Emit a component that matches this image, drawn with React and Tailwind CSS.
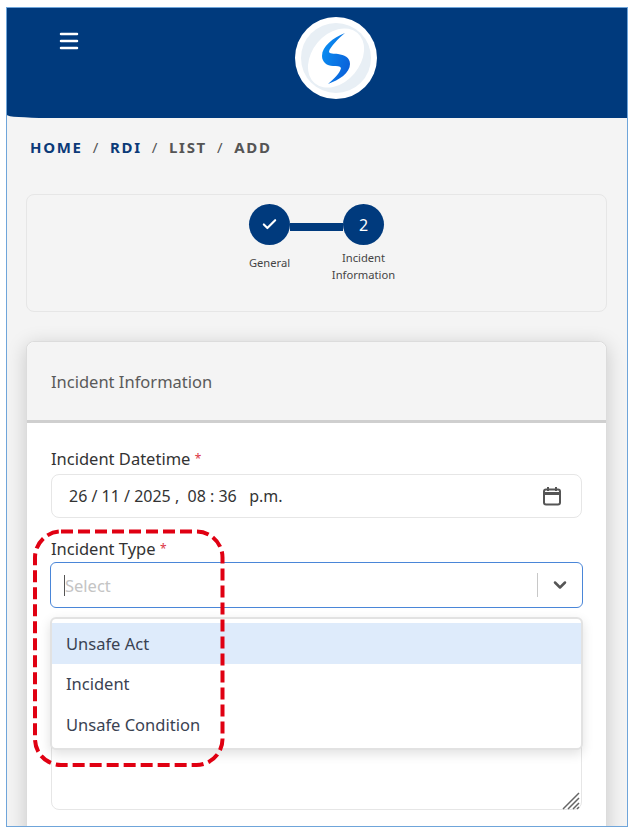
import React from "react";
import { Menu, Check, ChevronDown } from "lucide-react";

const font = { fontFamily: '"Noto Sans", sans-serif' };

const Logo = () => (
  <div className="w-[82px] h-[82px] rounded-full bg-white flex items-center justify-center">
    <svg width="70" height="70" viewBox="0 0 70 70">
      <defs>
        <linearGradient id="swoosh" x1="0" y1="0" x2="1" y2="0.6">
          <stop offset="0" stopColor="#0a94f5" />
          <stop offset="1" stopColor="#0a62da" />
        </linearGradient>
      </defs>
      <circle cx="35" cy="35" r="35" fill="#e8eff5" />
      <ellipse cx="35" cy="35" rx="24" ry="33" transform="rotate(40 35 35)" fill="#ffffff" />
      <path
        d="M44 10 C32 15 21 23 21 33 C21 39 26 43 32 43 C36 43 39 43 40 45 C39 50 33 56 27 61 C38 57 49 50 49 41 C49 34 43 32 37 31 C33 30.5 28 31 28 28.5 C29 24 38 15 44 10 Z"
        fill="url(#swoosh)"
      />
    </svg>
  </div>
);

const Stepper = () => (
  <div className="h-[118px] ml-[19px] mr-[20px] mt-[37px] bg-[#f4f4f4] border border-[#e6e6e6] rounded-lg flex justify-center pt-[9px]">
    <div className="flex flex-col items-center w-[41px]">
      <div className="w-[41px] h-[41px] rounded-full bg-[#003a7d] flex items-center justify-center text-white">
        <Check size={17} strokeWidth={3} />
      </div>
      <span className="mt-[10px] text-[11.2px] leading-4 text-[#444] whitespace-nowrap">General</span>
    </div>
    <div className="w-[53px] h-[8px] bg-[#003a7d] mt-[19px]" />
    <div className="flex flex-col items-center w-[41px]">
      <div className="w-[41px] h-[41px] rounded-full bg-[#003a7d] flex items-center justify-center text-white text-[16px]">
        2
      </div>
      <span className="mt-[4px] text-[11.2px] leading-[17px] text-[#444] text-center whitespace-nowrap">
        Incident
        <br />
        Information
      </span>
    </div>
  </div>
);

const options = ["Unsafe Act", "Incident", "Unsafe Condition"];

export default function App() {
  return (
    <div className="w-[634px] h-[834px] bg-white pl-[6px] pt-[7px]" style={font}>
      <div className="w-[622px] h-[820px] border border-[#6fa5da] bg-[#f4f4f4] overflow-hidden relative">
        <header className="h-[110px] bg-[#003a7d] rounded-bl-[40px_3px] pl-[288px] pt-[9px] relative">
          <Menu size={24} strokeWidth={2.5} className="absolute left-[50px] top-[21px] text-white" />
          <Logo />
        </header>

        <nav className="mt-[19px] ml-[23px] h-[20px] flex items-center text-[15px] font-bold tracking-[1.7px] text-[#555]">
          <span className="text-[#0b3a78]">HOME</span>
          <span className="mx-[10px] font-normal">/</span>
          <span className="text-[#0b3a78]">RDI</span>
          <span className="mx-[10px] font-normal">/</span>
          <span>LIST</span>
          <span className="mx-[10px] font-normal">/</span>
          <span>ADD</span>
        </nav>

        <Stepper />

        <section className="ml-[19px] mr-[20px] mt-[29px] h-[500px] bg-white border border-[#dcdcdc] rounded-t-lg shadow-[0_4px_20px_rgba(0,0,0,0.18)]">
          <div className="h-[81px] bg-[#f4f4f4] border-b-[3px] border-[#cfcfcf] rounded-t-lg flex items-center pl-[24px] pt-[2px] text-[16.5px] text-[#5a5a5a]">
            Incident Information
          </div>
          <div className="px-[24px] pt-[23px] relative">
            <label className="block text-[16.5px] leading-[26px] text-[#333]">
              Incident Datetime <span className="text-[#dc3545] text-[12px] align-top">*</span>
            </label>
            <div className="mt-[2px] h-[44px] border border-[#e6e6e6] rounded-lg flex items-center justify-between pl-[17px] pr-[19px] text-[16px] text-[#333]">
              <span className="whitespace-pre">26 / 11 / 2025 ,  08 : 36   p.m.</span>
              <svg width="20" height="20" viewBox="0 0 20 20" fill="none" stroke="#555" strokeWidth="2">
                <rect x="2" y="3.5" width="16" height="15" rx="2" />
                <path d="M2 7.5h16" strokeWidth="3" />
                <path d="M6 1v4M14 1v4" />
              </svg>
            </div>

            <label className="block mt-[18px] text-[16.5px] leading-[26px] text-[#333]">
              Incident Type <span className="text-[#dc3545] text-[12px] align-top">*</span>
            </label>
            <div className="-mx-px h-[46px] border border-[#4a86d8] rounded-md flex items-center bg-white">
              <span className="ml-[13px] w-px h-[21px] bg-[#555]" />
              <span className="flex-1 pt-[2px] text-[16.5px] text-[#c4c4c4]">Select</span>
              <span className="w-px h-[24px] bg-[#c8c8c8]" />
              <span className="w-[44px] flex justify-center text-[#555]">
                <ChevronDown size={20} strokeWidth={3} />
              </span>
            </div>

            <div className="mt-[9px] h-[193px] border border-[#e6e6e6] rounded-lg" />
            <div className="absolute right-[26px] top-[369px] w-[18px] h-[18px]">
              <svg width="18" height="18" viewBox="0 0 18 18" stroke="#666" strokeWidth="1.5">
                <path d="M1 17L17 1M6 17L17 6M11 17L17 11M15 17L17 15" />
              </svg>
            </div>

            {/* open dropdown sits over the textarea below */}
            <div className="absolute left-[23px] right-[23px] top-[194px] h-[133px] bg-white border-2 border-[#e2e2e2] rounded-md pt-[4px] shadow-[0_4px_12px_rgba(0,0,0,0.12)]">
              {options.map((opt, i) => (
                <div
                  key={opt}
                  className={`h-[40.5px] flex items-center pl-[14px] pt-[2px] text-[16.5px] text-[#3a4252] ${
                    i === 0 ? "bg-[#deebfb]" : ""
                  }`}
                >
                  {opt}
                </div>
              ))}
            </div>
          </div>
        </section>

        {/* red callout drawn over the screenshot */}
        <svg className="absolute left-[26px] top-[521px]" width="192" height="240" fill="none">
          <rect
            x="2"
            y="2.5"
            width="187.5"
            height="233.5"
            rx="26"
            stroke="#e00012"
            strokeWidth="4"
            strokeDasharray="12 5"
          />
        </svg>
      </div>
    </div>
  );
}
